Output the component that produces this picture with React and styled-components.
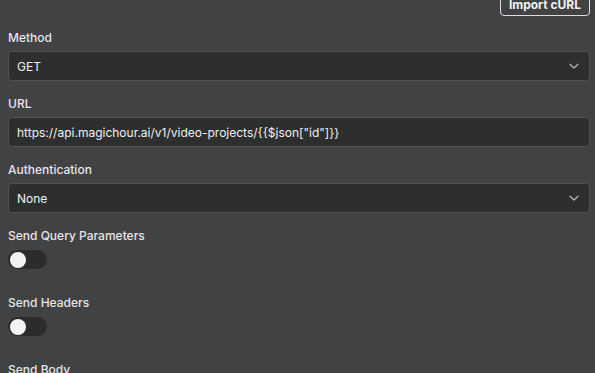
import React from "react";
import styled, { createGlobalStyle } from "styled-components";

const Global = createGlobalStyle`
  html, body {
    margin: 0;
    padding: 0;
    background: #414244;
    font-family: Inter, "Open Sans", sans-serif;
  }
`;

function Chevron() {
  return (
    <svg width="12" height="12" viewBox="0 0 12 12" fill="none">
      <path d="M2 4.2 L6 8 L10 4.2" stroke="#b8b9bb" strokeWidth="1.2" strokeLinecap="round" strokeLinejoin="round" />
    </svg>
  );
}

function App() {
  return (
    <Page>
      <Global />
      <TopBar>
        <ImportButton>Import cURL</ImportButton>
      </TopBar>
      <Field>
        <Label>Method</Label>
        <Box>
          <Value>GET</Value>
          <Chevron />
        </Box>
      </Field>
      <Field>
        <Label>URL</Label>
        <Box>
          <Value>{'https://api.magichour.ai/v1/video-projects/{{$json["id"]}}'}</Value>
        </Box>
      </Field>
      <Field>
        <Label>Authentication</Label>
        <Box>
          <Value>None</Value>
          <Chevron />
        </Box>
      </Field>
      <Field>
        <Label>Send Query Parameters</Label>
        <Toggle>
          <Knob />
        </Toggle>
      </Field>
      <Field>
        <Label>Send Headers</Label>
        <Toggle>
          <Knob />
        </Toggle>
      </Field>
      <Field>
        <Label>Send Body</Label>
      </Field>
    </Page>
  );
}

const Page = styled.div`
  width: 595px;
  height: 373px;
  overflow: hidden;
  box-sizing: border-box;
  padding: 0 5px 0 8px;
  display: flex;
  flex-direction: column;
  gap: 16px;
`;

const TopBar = styled.div`
  display: flex;
  justify-content: flex-end;
  margin-top: -8px;
  margin-bottom: -1px;
`;

const ImportButton = styled.div`
  border: 1px solid #dcdcde;
  border-radius: 4px;
  padding: 4px 8px 3px;
  color: #f2f2f2;
  font-size: 12px;
  font-weight: 700;
  line-height: 15px;
`;

const Field = styled.div`
  display: flex;
  flex-direction: column;
  gap: 6px;
`;

const Label = styled.div`
  color: #e6e6e8;
  font-size: 12px;
  font-weight: 500;
  line-height: 14px;
`;

const Box = styled.div`
  height: 30px;
  box-sizing: border-box;
  border: 1px solid #515254;
  border-radius: 4px;
  background: #2d2e2e;
  display: flex;
  align-items: center;
  justify-content: space-between;
  padding: 0 9px 0 8px;
`;

const Value = styled.div`
  color: #f0f0f0;
  font-size: 12px;
  font-weight: 400;
`;

const Toggle = styled.div`
  width: 39px;
  height: 19px;
  border-radius: 10px;
  background: #2b2c2c;
  display: flex;
  align-items: center;
  padding-left: 2px;
  box-sizing: border-box;
  margin-top: 1px;
  margin-bottom: 11px;
`;

const Knob = styled.div`
  width: 16px;
  height: 16px;
  border-radius: 50%;
  background: #f3f3f6;
`;

export default App;
